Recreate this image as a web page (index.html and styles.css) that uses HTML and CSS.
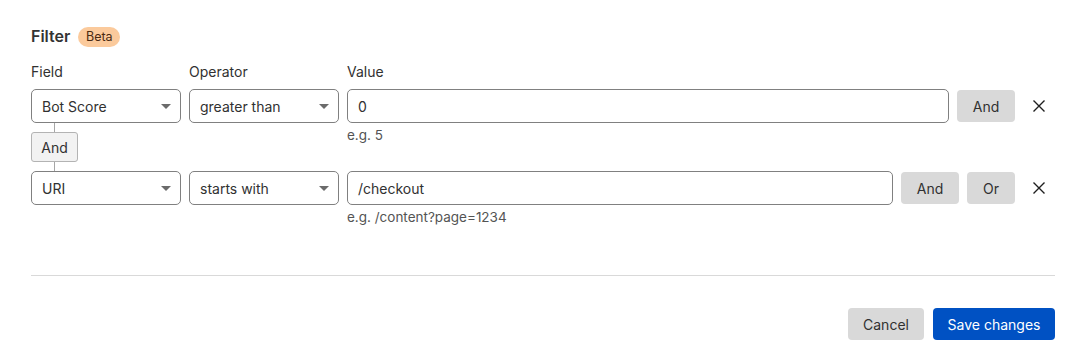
FILE: index.html
```html
<!DOCTYPE html>
<html lang="en">
<head>
<meta charset="utf-8">
<title>Filter</title>
<link rel="stylesheet" href="styles.css">
</head>
<body>
<div class="panel">
  <div class="title-row">
    <h2 class="title">Filter</h2>
    <span class="badge">Beta</span>
  </div>

  <div class="labels">
    <span class="label col-field">Field</span>
    <span class="label col-op">Operator</span>
    <span class="label">Value</span>
  </div>

  <div class="rule">
    <div class="col-field">
      <div class="select"><span>Bot Score</span><span class="caret"></span></div>
      <div class="connector">
        <span class="vline"></span>
        <span class="conn-box">And</span>
        <span class="vline"></span>
      </div>
    </div>
    <div class="col-op">
      <div class="select"><span>greater than</span><span class="caret"></span></div>
    </div>
    <div class="col-value">
      <div class="input">0</div>
      <div class="hint">e.g. 5</div>
    </div>
    <div class="actions">
      <button class="btn">And</button>
    </div>
    <button class="close" aria-label="Remove">
      <svg width="14" height="14" viewBox="0 0 14 14"><path d="M1.5 1.5 L12.5 12.5 M12.5 1.5 L1.5 12.5" stroke="#1f1f1f" stroke-width="1.4" fill="none"/></svg>
    </button>
  </div>

  <div class="rule">
    <div class="col-field">
      <div class="select"><span>URI</span><span class="caret"></span></div>
    </div>
    <div class="col-op">
      <div class="select"><span>starts with</span><span class="caret"></span></div>
    </div>
    <div class="col-value">
      <div class="input">/checkout</div>
      <div class="hint">e.g. /content?page=1234</div>
    </div>
    <div class="actions">
      <button class="btn">And</button>
      <button class="btn btn-or">Or</button>
    </div>
    <button class="close" aria-label="Remove">
      <svg width="14" height="14" viewBox="0 0 14 14"><path d="M1.5 1.5 L12.5 12.5 M12.5 1.5 L1.5 12.5" stroke="#1f1f1f" stroke-width="1.4" fill="none"/></svg>
    </button>
  </div>

  <hr class="divider">

  <div class="footer">
    <button class="btn btn-cancel">Cancel</button>
    <button class="btn btn-primary">Save changes</button>
  </div>
</div>
</body>
</html>
```

FILE: styles.css
```css
* { box-sizing: border-box; }

body {
  margin: 0;
  background: #ffffff;
  font-family: Inter, "Noto Sans", sans-serif;
  color: #313131;
  font-size: 14px;
}

.panel {
  padding: 27px 21px 0 31px;
}

.title-row {
  display: flex;
  align-items: center;
  gap: 8px;
  height: 20px;
}

.title {
  margin: 0;
  padding-bottom: 3px;
  font-size: 16px;
  font-weight: 600;
  line-height: 20px;
  color: #333333;
}

.badge {
  display: inline-flex;
  align-items: center;
  justify-content: center;
  height: 20px;
  width: 42px;
  border-radius: 10px;
  background: #fbca9c;
  color: #4a2a12;
  font-size: 12.5px;
  line-height: 20px;
}

.labels {
  display: flex;
  gap: 8px;
  margin-top: 15px;
  line-height: 20px;
  font-size: 14px;
}

.label { color: #313131; }

.col-field, .col-op {
  width: 150px;
  flex: 0 0 150px;
}

.rule {
  display: flex;
  align-items: flex-start;
  gap: 8px;
}

.labels + .rule { margin-top: 7px; }

.select {
  height: 34px;
  border: 1px solid #808080;
  border-radius: 5px;
  display: flex;
  align-items: center;
  justify-content: space-between;
  padding: 0 9px 0 10px;
  font-size: 14px;
  color: #313131;
  background: #fff;
}

.caret {
  width: 0;
  height: 0;
  border-left: 5px solid transparent;
  border-right: 5px solid transparent;
  border-top: 5px solid #6b6b6b;
}

.connector {
  display: flex;
  flex-direction: column;
  align-items: flex-start;
  height: 48px;
}

.vline {
  width: 1px;
  height: 9px;
  background: #a6a6a6;
  margin-left: 23px;
}

.conn-box {
  width: 47px;
  height: 30px;
  border: 1px solid #b3b3b3;
  border-radius: 3px;
  background: #f2f2f2;
  display: flex;
  align-items: center;
  justify-content: center;
  font-size: 14px;
  color: #313131;
}

.col-value {
  flex: 1 1 auto;
  min-width: 0;
}

.input {
  height: 34px;
  border: 1px solid #808080;
  border-radius: 5px;
  display: flex;
  align-items: center;
  padding: 0 10px;
  font-size: 14px;
  color: #313131;
  background: #fff;
}

.hint {
  margin-top: 3px;
  font-size: 13.5px;
  line-height: 18px;
  color: #545454;
}

.actions {
  display: flex;
  gap: 8px;
  padding-top: 1px;
}

.btn {
  font-family: Inter, "Noto Sans", sans-serif;
  font-size: 14px;
  height: 32px;
  width: 58px;
  border: none;
  border-radius: 4px;
  background: #d9d9d9;
  color: #313131;
  padding: 0;
  cursor: pointer;
}

.btn-or { width: 48px; }

.close {
  width: 32px;
  height: 34px;
  border: none;
  background: transparent;
  padding: 0;
  display: flex;
  align-items: center;
  justify-content: center;
  cursor: pointer;
}

.divider {
  border: none;
  border-top: 1px solid #d9d9d9;
  margin: 49px 0 0 0;
  height: 0;
}

.footer {
  display: flex;
  justify-content: flex-end;
  gap: 9px;
  padding-top: 32px;
}

.btn-cancel { width: 76px; }

.btn-primary {
  width: 122px;
  background: #0051c3;
  color: #ffffff;
}
```
